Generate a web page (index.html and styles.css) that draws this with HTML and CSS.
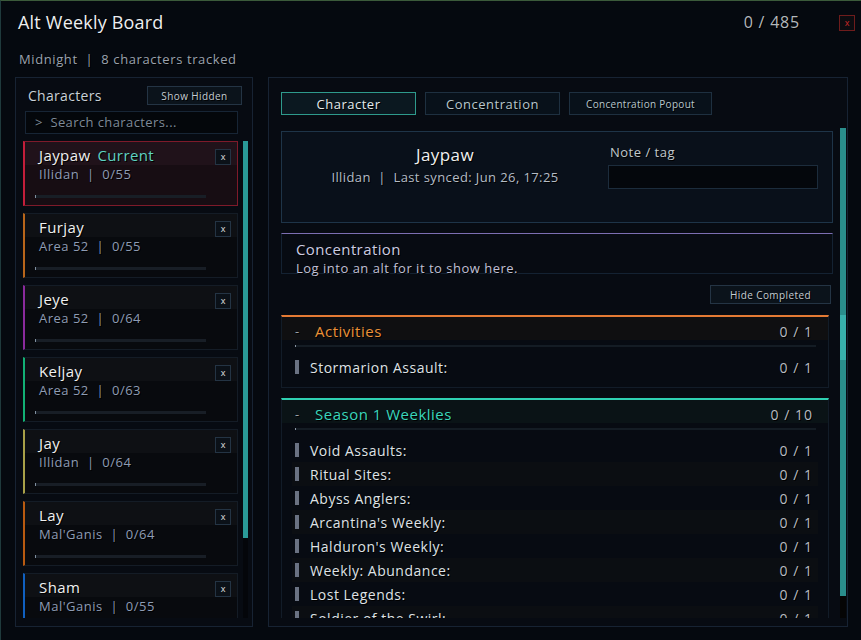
FILE: index.html
```html
<!DOCTYPE html>
<html lang="en">
<head>
    <meta charset="UTF-8">
    <title>Alt Weekly Board</title>
    <link rel="stylesheet" href="styles.css">
</head>
<body>
    <div class="window">
        <div class="titlebar">
            <h1 class="title">Alt Weekly Board</h1>
            <span class="total">0 / 485</span>
            <button class="close">x</button>
        </div>
        <div class="subtitle">Midnight &nbsp;|&nbsp; 8 characters tracked</div>

        <div class="main">
            <!-- left: character list -->
            <div class="panel side">
                <div class="side-head">
                    <span class="side-title">Characters</span>
                    <button class="btn small">Show Hidden</button>
                </div>
                <div class="search">&gt;&nbsp; Search characters...</div>
                <div class="list-wrap">
                    <div class="list">
                        <div class="card selected" style="--cls: #c41e3a">
                            <div class="card-top"><span class="name">Jaypaw</span><span class="current">Current</span><button class="xbtn">x</button></div>
                            <div class="realm">Illidan &nbsp;|&nbsp; 0/55</div>
                            <div class="bar"></div>
                        </div>
                        <div class="card" style="--cls: #b8651a">
                            <div class="card-top"><span class="name">Furjay</span><button class="xbtn">x</button></div>
                            <div class="realm">Area 52 &nbsp;|&nbsp; 0/55</div>
                            <div class="bar"></div>
                        </div>
                        <div class="card" style="--cls: #8a2a9c">
                            <div class="card-top"><span class="name">Jeye</span><button class="xbtn">x</button></div>
                            <div class="realm">Area 52 &nbsp;|&nbsp; 0/64</div>
                            <div class="bar"></div>
                        </div>
                        <div class="card" style="--cls: #12b074">
                            <div class="card-top"><span class="name">Keljay</span><button class="xbtn">x</button></div>
                            <div class="realm">Area 52 &nbsp;|&nbsp; 0/63</div>
                            <div class="bar"></div>
                        </div>
                        <div class="card" style="--cls: #a8a048">
                            <div class="card-top"><span class="name">Jay</span><button class="xbtn">x</button></div>
                            <div class="realm">Illidan &nbsp;|&nbsp; 0/64</div>
                            <div class="bar"></div>
                        </div>
                        <div class="card" style="--cls: #b85a10">
                            <div class="card-top"><span class="name">Lay</span><button class="xbtn">x</button></div>
                            <div class="realm">Mal'Ganis &nbsp;|&nbsp; 0/64</div>
                            <div class="bar"></div>
                        </div>
                        <div class="card" style="--cls: #1060c0">
                            <div class="card-top"><span class="name">Sham</span><button class="xbtn">x</button></div>
                            <div class="realm">Mal'Ganis &nbsp;|&nbsp; 0/55</div>
                            <div class="bar"></div>
                        </div>
                    </div>
                    <div class="scroll"><div class="thumb left-thumb"></div></div>
                </div>
            </div>

            <!-- right: details -->
            <div class="panel detail">
                <div class="tabs">
                    <button class="tab active">Character</button>
                    <button class="tab">Concentration</button>
                    <button class="tab mini">Concentration Popout</button>
                </div>
                <div class="detail-wrap">
                    <div class="detail-body">
                        <div class="info">
                            <div class="info-main">
                                <div class="info-name">Jaypaw</div>
                                <div class="info-sub">Illidan &nbsp;|&nbsp; Last synced: Jun 26, 17:25</div>
                            </div>
                            <div class="note">
                                <div class="note-label">Note / tag</div>
                                <div class="note-input"></div>
                            </div>
                        </div>

                        <div class="conc">
                            <div class="conc-title">Concentration</div>
                            <div class="conc-text">Log into an alt for it to show here.</div>
                        </div>

                        <div class="hide-row"><button class="btn small wide">Hide Completed</button></div>

                        <div class="section activities">
                            <div class="sec-head"><span class="dash">-</span><span class="sec-title">Activities</span><span class="count">0 / 1</span></div>
                            <div class="sec-line"></div>
                            <div class="row"><span class="mark"></span><span class="label">Stormarion Assault:</span><span class="count">0 / 1</span></div>
                        </div>

                        <div class="section weeklies">
                            <div class="sec-head"><span class="dash">-</span><span class="sec-title">Season 1 Weeklies</span><span class="count">0 / 10</span></div>
                            <div class="sec-line"></div>
                            <div class="row"><span class="mark"></span><span class="label">Void Assaults:</span><span class="count">0 / 1</span></div>
                            <div class="row"><span class="mark"></span><span class="label">Ritual Sites:</span><span class="count">0 / 1</span></div>
                            <div class="row"><span class="mark"></span><span class="label">Abyss Anglers:</span><span class="count">0 / 1</span></div>
                            <div class="row"><span class="mark"></span><span class="label">Arcantina's Weekly:</span><span class="count">0 / 1</span></div>
                            <div class="row"><span class="mark"></span><span class="label">Halduron's Weekly:</span><span class="count">0 / 1</span></div>
                            <div class="row"><span class="mark"></span><span class="label">Weekly: Abundance:</span><span class="count">0 / 1</span></div>
                            <div class="row"><span class="mark"></span><span class="label">Lost Legends:</span><span class="count">0 / 1</span></div>
                            <div class="row"><span class="mark"></span><span class="label">Soldier of the Swirl:</span><span class="count">0 / 1</span></div>
                        </div>
                    </div>
                    <div class="scroll right"><div class="thumb right-thumb"></div></div>
                </div>
            </div>
        </div>
    </div>
</body>
</html>
```

FILE: styles.css
```css
/* WoW-ish dark frame */
body {
    margin: 0;
    background: #060a18;
    font-family: "Open Sans", "DejaVu Sans", sans-serif;
    color: #e6e8ea;
}

.window {
    width: 861px;
    height: 640px;
    box-sizing: border-box;
    background: #05090f;
    border-top: 1px solid #3b5a3a;
    border-left: 1px solid #1f3a3c;
    padding: 0 14px 0 14px;
    overflow: hidden;
    text-shadow: 1px 1px 0 #000;
}

.titlebar {
    display: flex;
    align-items: center;
    height: 41px;
}

.title {
    margin: 0 0 0 3px;
    font-size: 18px;
    font-weight: 400;
    color: #eceef0;
    letter-spacing: 0.2px;
    flex: 1;
}

.total {
    font-size: 16px;
    color: #b4b8bc;
    margin-right: 39px;
    letter-spacing: 0.8px;
}

.close {
    width: 16px;
    height: 16px;
    padding: 0;
    border: 1px solid #6e1c1c;
    background: #0c0c10;
    color: #d02828;
    font-size: 9px;
    line-height: 12px;
    font-family: inherit;
    margin-right: -8px;
    margin-top: 3px;
}

.subtitle {
    font-size: 13px;
    color: #9aa2ae;
    padding-left: 4px;
    height: 35px;
    line-height: 35px;
    letter-spacing: 0.6px;
}

.main {
    display: flex;
    gap: 15px;
    height: 550px;
}

.panel {
    border: 1px solid #172333;
    background: #070b12;
    box-sizing: border-box;
}

/* left list */
.side {
    width: 238px;
    padding: 8px 4px 8px 7px;
    display: flex;
    flex-direction: column;
}

.side-head {
    display: flex;
    align-items: center;
    justify-content: space-between;
    padding: 0 6px 0 5px;
    height: 19px;
}

.side-title {
    font-size: 14px;
    color: #c8d0d8;
    letter-spacing: 0.3px;
}

.btn {
    border: 1px solid #243444;
    background: #0b131b;
    color: #c4ccd2;
    font-family: inherit;
    text-shadow: 1px 1px 0 #000;
}

.btn.small {
    font-size: 10px;
    height: 19px;
    width: 95px;
    padding: 0;
    letter-spacing: 0.4px;
}

.btn.wide {
    width: 121px;
}

.search {
    margin: 6px 10px 0 2px;
    height: 23px;
    box-sizing: border-box;
    border: 1px solid #172535;
    background: #04070b;
    color: #7e8a98;
    font-size: 13px;
    line-height: 21px;
    padding-left: 9px;
    letter-spacing: 0.4px;
}

.list-wrap {
    display: flex;
    gap: 5px;
    margin-top: 7px;
    height: 477px;
    overflow: hidden;
}

.list {
    width: 216px;
    display: flex;
    flex-direction: column;
    gap: 7px;
}

.card {
    flex: none;
    height: 65px;
    box-sizing: border-box;
    border: 1px solid #141c26;
    border-left: 2px solid var(--cls);
    background: linear-gradient(#0e1014 0, #0e1014 23px, #080a0e 23px);
    padding: 5px 7px 0 14px;
    position: relative;
}

.card.selected {
    border-color: #7e1a2a;
    border-left-color: var(--cls);
    background: linear-gradient(#20121a 0, #20121a 23px, #170d13 23px);
}

.card-top {
    display: flex;
    align-items: center;
    height: 17px;
}

.name {
    font-size: 15px;
    line-height: 17px;
    color: #f0f0f0;
    letter-spacing: 0.4px;
}

.current {
    font-size: 15px;
    line-height: 17px;
    color: #5ed2c2;
    margin-left: 7px;
    letter-spacing: 0.4px;
}

.xbtn {
    margin-left: auto;
    width: 16px;
    height: 16px;
    padding: 0;
    border: 1px solid #243444;
    background: #0b1118;
    color: #e0e0e0;
    font-size: 9px;
    line-height: 12px;
    font-family: inherit;
    margin-top: 3px;
    margin-right: -1px;
}

.realm {
    font-size: 13px;
    line-height: 16px;
    margin-top: 2px;
    color: #8e9cb4;
    letter-spacing: 0.5px;
}

.bar {
    position: absolute;
    left: 10px;
    bottom: 7px;
    width: 170px;
    height: 3px;
    background: #181e26;
    border-left: 1px solid #8090a0;
}

.scroll {
    width: 5px;
    background: #04060a;
    flex: none;
}

.left-thumb {
    height: 397px;
    background: #2a9a98;
}

/* right detail */
.detail {
    flex: 1;
    padding: 14px 1px 8px 12px;
    display: flex;
    flex-direction: column;
}

.tabs {
    display: flex;
    gap: 9px;
}

.tab {
    width: 135px;
    height: 23px;
    border: 1px solid #1e3040;
    background: #08111a;
    color: #b8c6cc;
    font-family: inherit;
    font-size: 13px;
    padding: 0;
    letter-spacing: 0.5px;
    text-shadow: 1px 1px 0 #000;
}

.tab.active {
    border-color: #2e9a8c;
    background: #0b1820;
    color: #e4eaec;
}

.tab.mini {
    width: 143px;
    font-size: 10px;
    letter-spacing: 0.3px;
}

.detail-wrap {
    display: flex;
    margin-top: 13px;
    height: 490px;
    overflow: hidden;
}

.detail-body {
    width: 552px;
    padding-top: 3px;
}

.scroll.right {
    margin-left: 7px;
    width: 6px;
    background: #050505;
}

.right-thumb {
    height: 468px;
    background: linear-gradient(#2a8e8c 0, #2a8e8c 187px, #38b0ac 187px, #38b0ac 232px, #2a8e8c 232px);
}

.info {
    height: 92px;
    box-sizing: border-box;
    border: 1px solid #1e3448;
    background: #09101a;
    display: flex;
}

.info-main {
    width: 326px;
    text-align: center;
    padding-top: 11px;
}

.info-name {
    font-size: 17px;
    color: #f0f0f0;
    letter-spacing: 0.4px;
}

.info-sub {
    font-size: 13px;
    color: #b4bcc6;
    margin-top: 2px;
    letter-spacing: 0.4px;
}

.note {
    padding-top: 11px;
}

.note-label {
    font-size: 13px;
    color: #c0c8cc;
    padding-left: 2px;
    letter-spacing: 0.5px;
}

.note-input {
    width: 210px;
    height: 24px;
    box-sizing: border-box;
    border: 1px solid #1c2c3c;
    background: #04070c;
    margin-top: 4px;
}

.conc {
    margin-top: 10px;
    height: 41px;
    box-sizing: border-box;
    border: 1px solid #142232;
    border-top: 1px solid #7c6eb2;
    padding: 6px 0 0 14px;
}

.conc-title {
    font-size: 15px;
    color: #cccce2;
    line-height: 18px;
    letter-spacing: 0.4px;
}

.conc-text {
    font-size: 13px;
    color: #c0c0d6;
    line-height: 21px;
    letter-spacing: 0.5px;
}

.hide-row {
    display: flex;
    justify-content: flex-end;
    padding: 11px 2px 0 0;
    height: 19px;
    margin-bottom: 11px;
}

.section {
    width: 548px;
    box-sizing: border-box;
    border: 1px solid #121c28;
    margin-bottom: 10px;
    padding-bottom: 8px;
}

.activities {
    border-top: 2px solid #e47a34;
}

.weeklies {
    border-top: 2px solid #2fd0b2;
}

.sec-head {
    display: flex;
    align-items: center;
    box-sizing: border-box;
    height: 23px;
    padding: 5px 15px 0 13px;
}

.activities .sec-head {
    background: #0f0f11;
}

.weeklies .sec-head {
    background: #0a1316;
}

.dash {
    font-size: 13px;
    color: #9aa0a8;
    width: 20px;
}

.sec-title {
    font-size: 15px;
    letter-spacing: 0.5px;
}

.activities .sec-title {
    color: #ec9238;
}

.weeklies .sec-title {
    color: #3ad6bc;
}

.count {
    margin-left: auto;
    font-size: 14px;
    color: #b8bcc2;
    letter-spacing: 1px;
}

.sec-line {
    margin: 5px 12px 8px 13px;
    height: 2px;
    background: #141c24;
    border-left: 1px solid #8a96a4;
}

.row {
    display: flex;
    align-items: center;
    height: 24px;
    margin: 0 10px 0 10px;
    padding: 0 5px 0 3px;
}

.row:nth-of-type(even) {
    background: #0b0e12;
}

.activities .row {
    background: none;
}

.mark {
    width: 4px;
    height: 14px;
    background: #6a7282;
    margin-right: 11px;
}

.label {
    font-size: 14px;
    color: #dfe2e6;
    letter-spacing: 0.5px;
}
```
